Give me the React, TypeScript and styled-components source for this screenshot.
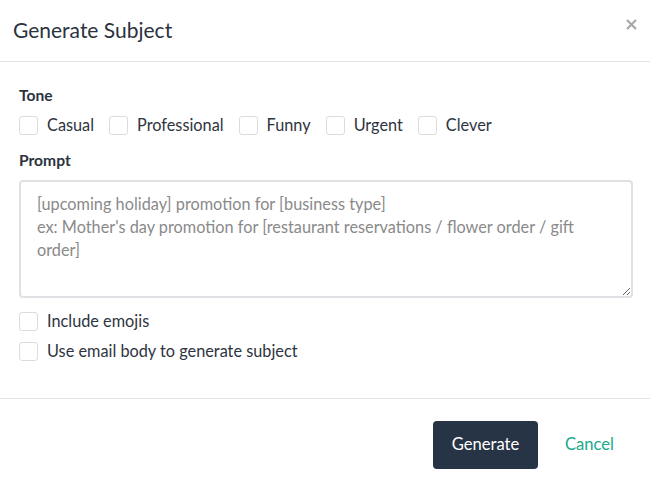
import React from "react";
import styled, { createGlobalStyle } from "styled-components";

const Global = createGlobalStyle`
  html, body { margin: 0; padding: 0; background: #fff; }
  body { font-family: Lato, "Open Sans", sans-serif; color: #2e3440; }
  * { box-sizing: border-box; }
`;

const Dialog = styled.div`
  width: 650px;
  height: 487px;
  display: flex;
  flex-direction: column;
  background: #fff;
`;

const Header = styled.div`
  height: 62px;
  display: flex;
  align-items: center;
  justify-content: space-between;
  padding: 0 13px 2px 13px;
  border-bottom: 1px solid #e3e3e3;
`;

const Title = styled.h2`
  margin: 0;
  font-size: 21px;
  font-weight: 400;
  color: #2b3340;
`;

const Close = styled.button`
  border: 0;
  background: none;
  padding: 0;
  width: 14px;
  height: 14px;
  margin-top: -10px;
  margin-right: -1px;
  display: flex;
  align-items: center;
  justify-content: center;
  cursor: pointer;
`;

const Body = styled.div`
  flex: 1;
  padding: 23px 17px 0 19px;
  display: flex;
  flex-direction: column;
`;

const Label = styled.div`
  font-size: 15.6px;
  font-weight: 700;
  line-height: 20px;
  color: #2b3340;
`;

const ToneRow = styled.div`
  display: flex;
  align-items: center;
  gap: 15px;
  margin-top: 10px;
  margin-bottom: 15px;
`;

const Check = styled.label<{ $mt?: number }>`
  display: flex;
  align-items: center;
  gap: 9px;
  font-size: 16.3px;
  line-height: 20px;
  color: #2e3440;
  margin-top: ${(p) => p.$mt ?? 0}px;
  cursor: pointer;
`;

const Box = styled.span`
  width: 19px;
  height: 19px;
  border: 1px solid #dcdcdc;
  border-radius: 3px;
  background: #fff;
  flex: none;
`;

const Prompt = styled.textarea`
  margin-top: 10px;
  width: 614px;
  height: 118px;
  border: 2px solid #dfe1e5;
  border-radius: 4px;
  padding: 10px 16px;
  font-family: Lato, sans-serif;
  font-size: 16.3px;
  line-height: 23px;
  color: #2e3440;
  resize: both;
  outline: none;
  margin-bottom: 13px;
  &::placeholder { color: #8a8a8a; }
`;

const Footer = styled.div`
  height: 89px;
  border-top: 1px solid #e3e3e3;
  display: flex;
  align-items: flex-start;
  justify-content: flex-end;
  padding: 22px 36px 0 0;
  gap: 27px;
`;

const Primary = styled.button`
  height: 48px;
  width: 105px;
  border: 0;
  border-radius: 4px;
  background: #273446;
  color: #fff;
  font-family: Lato, sans-serif;
  font-size: 16.6px;
  padding: 0 0 2px;
  cursor: pointer;
`;

const Link = styled.button`
  height: 48px;
  border: 0;
  background: none;
  padding: 0 0 2px;
  color: #22a98b;
  font-family: Lato, sans-serif;
  font-size: 16.6px;
  cursor: pointer;
`;

const tones = ["Casual", "Professional", "Funny", "Urgent", "Clever"];

export default function App() {
  return (
    <>
      <Global />
      <Dialog>
        <Header>
          <Title>Generate Subject</Title>
          <Close aria-label="Close">
            <svg width="11" height="11" viewBox="0 0 11 11">
              <path d="M1 1L10 10M10 1L1 10" stroke="#a9a9a9" strokeWidth="2.2" strokeLinecap="butt" />
            </svg>
          </Close>
        </Header>
        <Body>
          <Label>Tone</Label>
          <ToneRow>
            {tones.map((t) => (
              <Check key={t}>
                <Box />
                {t}
              </Check>
            ))}
          </ToneRow>
          <Label>Prompt</Label>
          <Prompt
            placeholder={
              "[upcoming holiday] promotion for [business type]\nex: Mother's day promotion for [restaurant reservations / flower order / gift order]"
            }
          />
          <Check>
            <Box />
            Include emojis
          </Check>
          <Check $mt={10}>
            <Box />
            Use email body to generate subject
          </Check>
        </Body>
        <Footer>
          <Primary>Generate</Primary>
          <Link>Cancel</Link>
        </Footer>
      </Dialog>
    </>
  );
}
